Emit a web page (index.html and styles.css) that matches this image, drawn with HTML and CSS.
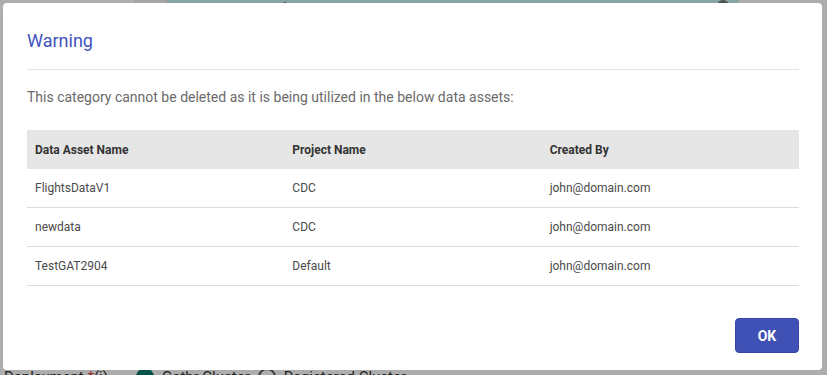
FILE: index.html
```html
<!DOCTYPE html>
<html lang="en">
<head>
    <meta charset="UTF-8">
    <meta name="viewport" content="width=device-width, initial-scale=1.0">
    <title>Warning</title>
    <link rel="stylesheet" href="styles.css">
</head>
<body>
    <div class="page">
        <div class="topbar">
            <div class="side"></div>
            <div class="tab"></div>
            <div class="banner">
                <span>Ingestion/ETL applications</span>
                <span class="dot"></span>
            </div>
        </div>
        <div class="spacer"></div>
        <div class="form-row">
            <span class="label">Deployment <b>*</b>(i)</span>
            <span class="radio on"></span>
            <span class="opt">Gathr Cluster</span>
            <span class="radio"></span>
            <span class="opt">Registered Cluster</span>
        </div>
    </div>

    <div class="overlay"></div>

    <div class="dialog">
        <div class="dialog-header">
            <h2>Warning</h2>
        </div>
        <p class="message">This category cannot be deleted as it is being utilized in the below data assets:</p>

        <table class="assets">
            <tr>
                <th>Data Asset Name</th>
                <th>Project Name</th>
                <th>Created By</th>
            </tr>
            <tr>
                <td>FlightsDataV1</td>
                <td>CDC</td>
                <td>john@domain.com</td>
            </tr>
            <tr>
                <td>newdata</td>
                <td>CDC</td>
                <td>john@domain.com</td>
            </tr>
            <tr>
                <td>TestGAT2904</td>
                <td>Default</td>
                <td>john@domain.com</td>
            </tr>
        </table>

        <div class="actions">
            <button class="ok">OK</button>
        </div>
    </div>
</body>
</html>
```
FILE: styles.css
```css
body {
    margin: 0;
    font-family: Roboto, "Liberation Sans", Arial, sans-serif;
    background-color: #fbfbfb;
    width: 827px;
    height: 375px;
    overflow: hidden;
    position: relative;
}
.page {
    height: 375px;
    display: flex;
    flex-direction: column;
}
.topbar {
    display: flex;
    height: 18px;
}
.side {
    width: 134px;
    background-color: #fdfdfd;
}
.tab {
    width: 33px;
    background-color: #f0f0f0;
}
.banner {
    width: 572px;
    background-color: #c4eded;
    color: #333;
    font-size: 13px;
    display: flex;
    justify-content: space-between;
    padding: 0 10px;
    box-sizing: border-box;
}
.dot {
    width: 12px;
    height: 12px;
    border-radius: 50%;
    background-color: #777;
}
.spacer {
    flex: 1;
}
.form-row {
    height: 16px;
    display: flex;
    align-items: center;
    gap: 8px;
    padding-left: 4px;
    font-size: 15px;
    color: #333;
    margin-bottom: -10px;
}
.label {
    width: 124px;
}
.label b {
    color: #e53935;
    font-weight: normal;
}
.radio {
    width: 14px;
    height: 14px;
    border: 2px solid #555;
    border-radius: 50%;
}
.radio.on {
    border-color: #00796b;
    background-color: #00796b;
}
.overlay {
    position: absolute;
    inset: 0;
    background-color: rgba(0, 0, 0, 0.31);
}

.dialog {
    position: absolute;
    left: 3px;
    top: 3px;
    width: 819px;
    height: 367px;
    box-sizing: border-box;
    padding: 0 23px 0 24px;
    background-color: #fff;
    border-radius: 4px;
}
.dialog-header {
    padding: 26px 0 16px;
    border-bottom: 1px solid #e3e3e3;
}
.dialog-header h2 {
    margin: 0;
    font-size: 18px;
    line-height: 24px;
    font-weight: normal;
    color: #4153bd;
}
.message {
    margin: 17px 0 23px;
    font-size: 14px;
    line-height: 20px;
    color: #6a6a6a;
}
.assets {
    width: 100%;
    border-collapse: collapse;
    font-size: 12px;
}
.assets th {
    background-color: #e6e6e6;
    color: #333;
    font-weight: bold;
    text-align: left;
    height: 39px;
    padding: 0 8px;
    width: 33.33%;
}
.assets td {
    height: 38px;
    padding: 0 8px;
    color: #4a4a4a;
    border-bottom: 1px solid #dcdcdc;
}
.actions {
    display: flex;
    justify-content: flex-end;
    margin-top: 32px;
}
.ok {
    width: 64px;
    height: 35px;
    border: 1px solid #3545a8;
    border-radius: 4px;
    background-color: #3f51b5;
    color: #fff;
    font-family: inherit;
    font-size: 14px;
    font-weight: bold;
}
```
